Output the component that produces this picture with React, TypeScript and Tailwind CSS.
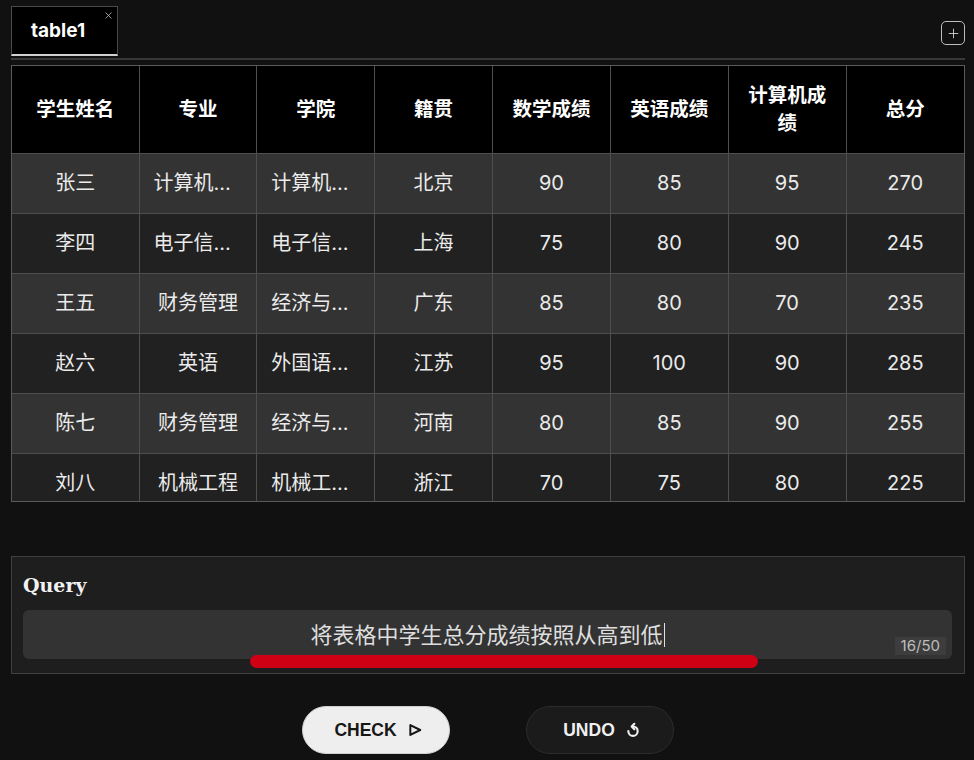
import { X, Plus } from "lucide-react";

type Row = [string, string, string, string, number, number, number, number];

const headers = ["学生姓名", "专业", "学院", "籍贯", "数学成绩", "英语成绩", "计算机成绩", "总分"];

const rows: Row[] = [
  ["张三", "计算机科学与技术", "计算机学院", "北京", 90, 85, 95, 270],
  ["李四", "电子信息工程", "电子信息学院", "上海", 75, 80, 90, 245],
  ["王五", "财务管理", "经济与管理学院", "广东", 85, 80, 70, 235],
  ["赵六", "英语", "外国语学院", "江苏", 95, 100, 90, 285],
  ["陈七", "财务管理", "经济与管理学院", "河南", 80, 85, 90, 255],
  ["刘八", "机械工程", "机械工程学院", "浙江", 70, 75, 80, 225],
];

function UndoIcon() {
  return (
    <svg width="16" height="17" viewBox="0 0 24 24" fill="none" stroke="currentColor" strokeWidth="3.2" strokeLinecap="round" strokeLinejoin="round">
      <path d="M12 6a7 7 0 1 1-7 7" />
      <path d="M14 2 10 6 14 10" />
    </svg>
  );
}

function PlayIcon() {
  return (
    <svg width="14" height="14" viewBox="0 0 24 24" fill="none" stroke="currentColor" strokeWidth="3.4" strokeLinejoin="round">
      <path d="M4 3.5 21 12 4 20.5Z" />
    </svg>
  );
}

export default function App() {
  return (
    <div className="min-h-[760px] bg-[#111111] pl-[11px] pr-[9px] pt-[6px] font-[family-name:Inter,'Noto_Sans_CJK_SC',sans-serif] text-[#e6e6e6]">
      {/* tabs */}
      <div className="flex h-[54px] items-start justify-between border-b-2 border-[#383838]">
        <div className="relative flex h-[50px] w-[107px] items-center border border-[#4a4a4a] border-b-2 border-b-[#d0d0d0] bg-black pl-[19px] pt-[2px]">
          <span className="text-[19px] font-bold text-white">table1</span>
          <X className="absolute right-[3px] top-[3px] text-[#cfcfcf]" size={11} strokeWidth={1.6} />
        </div>
        <button className="mt-[15px] flex h-[24px] w-[24px] items-center justify-center rounded-[5px] border-[1.5px] border-[#bdbdbd] text-[#d6d6d6]">
          <Plus size={15} strokeWidth={1.4} />
        </button>
      </div>

      {/* table */}
      <div className="mt-[5px] h-[437px] overflow-hidden border border-[#5a5a5a]">
        <table className="w-full table-fixed border-collapse">
          <colgroup>
            <col className="w-[127px]" />
            <col />
            <col />
            <col />
            <col />
            <col />
            <col />
            <col />
          </colgroup>
          <thead>
            <tr className="h-[87px] bg-black">
              {headers.map(h => (
                <th
                  key={h}
                  className="border border-t-0 border-[#4e4e4e] px-[14px] text-center text-[19.5px] font-bold leading-[28px] text-white first:border-l-0 last:border-r-0"
                >
                  {h}
                </th>
              ))}
            </tr>
          </thead>
          <tbody>
            {rows.map((r, i) => (
              <tr key={r[0]} className={i % 2 === 0 ? "h-[60px] bg-[#333333]" : "h-[60px] bg-[#212121]"}>
                {r.map((c, j) => (
                  <td
                    key={j}
                    className="overflow-hidden text-ellipsis whitespace-nowrap border border-[#4e4e4e] px-[14px] text-center text-[20px] text-[#ebebeb] first:border-l-0 last:border-r-0"
                  >
                    {c}
                  </td>
                ))}
              </tr>
            ))}
          </tbody>
        </table>
      </div>

      {/* query */}
      <div className="relative mt-[54px] h-[118px] border border-[#404040] bg-[#1e1e1e] pl-[11px] pr-[12px] pt-[14px]">
        <div className="font-[family-name:'DejaVu_Serif',serif] text-[19px] font-bold leading-[28px] text-[#f2f2f2]">Query</div>
        <div className="relative mt-[11px] flex h-[49px] items-center justify-center rounded-[6px] bg-[#333333]">
          <span className="text-[22px] leading-none text-[#dedede]">将表格中学生总分成绩按照从高到低</span>
          <span className="ml-[1px] h-[24px] w-px bg-[#e0e0e0]" />
          <span className="absolute bottom-[4px] right-[6px] bg-[#3d3d3d] px-[6px] text-[15px] leading-[18px] text-[#bdbdbd]">16/50</span>
        </div>
        <div className="absolute left-[238px] top-[98px] h-[13px] w-[508px] rounded-full bg-[#cf0014]" />
      </div>

      {/* actions */}
      <div className="mt-[32px] flex justify-center gap-[76px] font-[family-name:'Liberation_Sans',Arial,sans-serif]">
        <button className="flex h-[48px] w-[148px] items-center justify-center gap-[11px] rounded-full border border-[#cfcfcf] bg-[#eeeeee] pl-[4px] text-[17.5px] font-bold text-[#161616]">
          CHECK
          <PlayIcon />
        </button>
        <button className="flex h-[48px] w-[148px] items-center justify-center gap-[10px] rounded-full border border-[#2c2c2c] bg-[#1b1b1b] pl-[4px] text-[17.5px] font-bold text-[#f0f0f0]">
          UNDO
          <UndoIcon />
        </button>
      </div>
    </div>
  );
}
